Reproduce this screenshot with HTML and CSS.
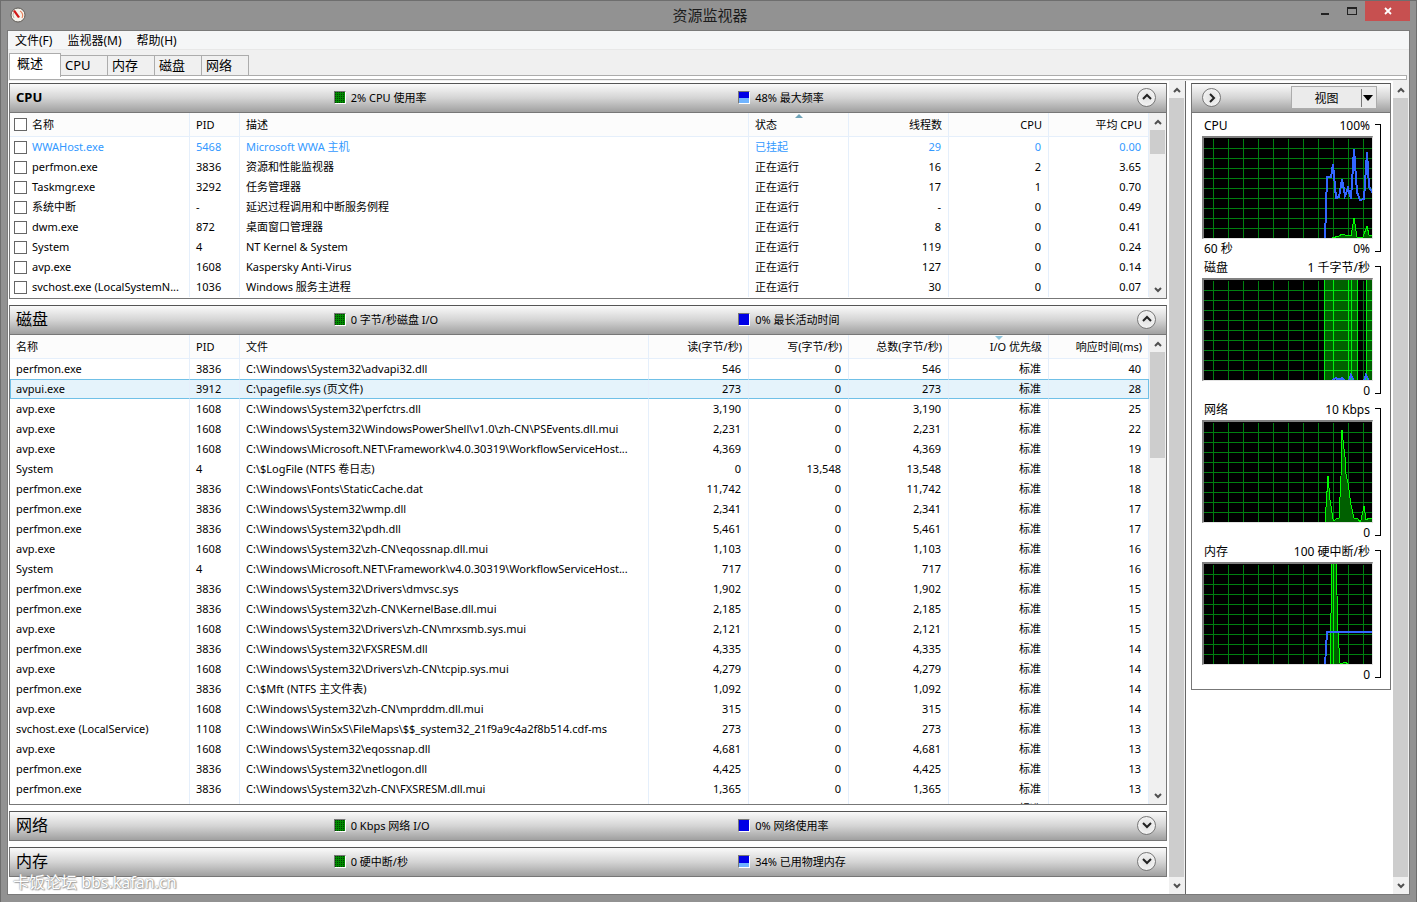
FILE: index.html
```
<!DOCTYPE html>
<html lang="zh-CN">
<head>
    <meta charset="UTF-8">
    <meta name="viewport" content="width=device-width, initial-scale=1.0">
    <title>资源监视器</title>
    <link rel="stylesheet" href="styles.css">
</head>
<body>
    <svg class="defs" width="0" height="0" aria-hidden="true">
        <defs>
            <pattern id="grid" x="-6" y="0" width="15" height="10" patternUnits="userSpaceOnUse">
                <path d="M0 0h15v1H1v9H0z" fill="#008010"/>
            </pattern>
            <pattern id="grid-lit" x="-6" y="0" width="15" height="10" patternUnits="userSpaceOnUse">
                <path d="M0 0h15v1H0z" fill="#00e010"/>
            </pattern>
            <symbol id="up" viewBox="0 0 8 6"><path d="M1 5 4 2l3 3" fill="none" stroke="#505050" stroke-width="2"/></symbol>
            <symbol id="down" viewBox="0 0 8 6"><path d="M1 1l3 3 3-3" fill="none" stroke="#505050" stroke-width="2"/></symbol>
        </defs>
    </svg>

    <div class="window">
        <header class="titlebar">
            <svg class="app-icon" viewBox="0 0 16 16">
                <circle cx="8" cy="8" r="7" fill="#f4f2ec" stroke="#5e5a55"/>
                <path d="M4 11a5 5 0 0 1 0-6" fill="none" stroke="#b9b4aa"/>
                <path d="M10 4a5 5 0 0 1 2 7" fill="none" stroke="#e8805c" stroke-width="1.2"/>
                <path d="M3 4l2-1 5 7-2 1z" fill="#d01717"/>
            </svg>
            <h1>资源监视器</h1>
            <div class="window-buttons">
                <button aria-label="最小化"><svg width="10" height="10"><path d="M1 7h8v2H1z" fill="#222"/></svg></button>
                <button aria-label="最大化"><svg width="10" height="10"><path d="M0 1h10v8H0zM1 3v5h8V3z" fill="#222" fill-rule="evenodd"/></svg></button>
                <button class="close" aria-label="关闭"><svg width="8" height="8"><path d="M1 1l6 6M7 1L1 7" stroke="#fff" stroke-width="1.8"/></svg></button>
            </div>
        </header>

        <div class="client">
            <nav class="menu">
                <button>文件(F)</button>
                <button>监视器(M)</button>
                <button>帮助(H)</button>
            </nav>
            <div class="tabs" role="tablist">
                <button class="tab active" role="tab">概述</button>
                <button class="tab" role="tab">CPU</button>
                <button class="tab" role="tab">内存</button>
                <button class="tab" role="tab">磁盘</button>
                <button class="tab" role="tab">网络</button>
            </div>
            <div class="tab-edge"></div>

            <div class="content">
                <main class="sections">
                    <section class="section">
                        <div class="section-head">
                            <h2 class="bold">CPU</h2>
                            <span class="stat"><i class="led green"></i>2% CPU 使用率</span>
                            <span class="stat"><i class="led blue half"></i>48% 最大频率</span>
                            <button class="round" aria-label="折叠"><svg width="10" height="8"><path d="M1 6l4-4 4 4" fill="none" stroke="#222" stroke-width="2"/></svg></button>
                        </div>
                        <div class="list cpu-list">
                            <table>
                                <colgroup><col class="c-name"><col class="c-pid"><col><col class="c-num"><col class="c-num"><col class="c-num"><col class="c-num"></colgroup>
                                <thead>
                                    <tr><th><label><input type="checkbox">名称</label></th><th>PID</th><th>描述</th><th class="sort-up">状态</th><th class="num">线程数</th><th class="num">CPU</th><th class="num">平均 CPU</th></tr>
                                </thead>
                                <tbody id="cpu-rows"></tbody>
                            </table>
                            <div class="scrollbar">
                                <button aria-label="向上"><svg width="8" height="6"><use href="#up"/></svg></button>
                                <div class="track"><div class="thumb short"></div></div>
                                <button aria-label="向下"><svg width="8" height="6"><use href="#down"/></svg></button>
                            </div>
                        </div>
                    </section>

                    <section class="section">
                        <div class="section-head">
                            <h2>磁盘</h2>
                            <span class="stat"><i class="led green"></i>0 字节/秒磁盘 I/O</span>
                            <span class="stat"><i class="led blue"></i>0% 最长活动时间</span>
                            <button class="round" aria-label="折叠"><svg width="10" height="8"><path d="M1 6l4-4 4 4" fill="none" stroke="#222" stroke-width="2"/></svg></button>
                        </div>
                        <div class="list disk-list">
                            <table>
                                <colgroup><col class="c-name"><col class="c-pid"><col><col class="c-num"><col class="c-num"><col class="c-num"><col class="c-num"><col class="c-num"></colgroup>
                                <thead>
                                    <tr><th>名称</th><th>PID</th><th>文件</th><th class="num">读(字节/秒)</th><th class="num">写(字节/秒)</th><th class="num">总数(字节/秒)</th><th class="num sort-down">I/O 优先级</th><th class="num">响应时间(ms)</th></tr>
                                </thead>
                                <tbody id="disk-rows"></tbody>
                            </table>
                            <div class="scrollbar">
                                <button aria-label="向上"><svg width="8" height="6"><use href="#up"/></svg></button>
                                <div class="track"><div class="thumb medium"></div></div>
                                <button aria-label="向下"><svg width="8" height="6"><use href="#down"/></svg></button>
                            </div>
                        </div>
                    </section>

                    <section class="section">
                        <div class="section-head">
                            <h2>网络</h2>
                            <span class="stat"><i class="led green"></i>0 Kbps 网络 I/O</span>
                            <span class="stat"><i class="led blue"></i>0% 网络使用率</span>
                            <button class="round" aria-label="展开"><svg width="10" height="8"><path d="M1 2l4 4 4-4" fill="none" stroke="#222" stroke-width="2"/></svg></button>
                        </div>
                    </section>

                    <section class="section">
                        <div class="section-head">
                            <h2>内存</h2>
                            <span class="stat"><i class="led green"></i>0 硬中断/秒</span>
                            <span class="stat"><i class="led blue third"></i>34% 已用物理内存</span>
                            <button class="round" aria-label="展开"><svg width="10" height="8"><path d="M1 2l4 4 4-4" fill="none" stroke="#222" stroke-width="2"/></svg></button>
                        </div>
                    </section>
                </main>
                <div class="scrollbar outer">
                    <button aria-label="向上"><svg width="8" height="6"><use href="#up"/></svg></button>
                    <div class="track"><div class="thumb"></div></div>
                    <button aria-label="向下"><svg width="8" height="6"><use href="#down"/></svg></button>
                </div>

                <aside class="graphs">
                    <div class="graph-panel">
                        <div class="section-head">
                            <button class="round" aria-label="隐藏图表"><svg width="8" height="10"><path d="M2 1l4 4-4 4" fill="none" stroke="#222" stroke-width="2"/></svg></button>
                            <button class="view">
                                <span>视图</span>
                                <svg width="12" height="18"><path d="M0 0h1v18H0z" fill="#777"/><path d="M2 6h10L7 12z" fill="#000"/></svg>
                            </button>
                        </div>
                        <div class="graph-list">
                            <figure class="graph">
                                <div class="graph-row"><span>CPU</span><span>100%</span></div>
                                <svg class="plot" viewBox="0 0 168 100" preserveAspectRatio="none">
                                    <path class="grid" d="M0 1h168v99H0z"/>
                                    <path class="area" d="M128 100l7-2 3-2 3 1h3l3 1 3-18 3 19h6l4-11 2 9 3 1v4z"/>
                                    <path class="line" d="M121 101l2-62h4l2-13 3 34 3-1 3-18 3 17 3-8 3 11 3-50 3 43 3 8 4-1 3-47 2 35 4 6"/>
                                </svg>
                                <div class="graph-row"><span>60 秒</span><span>0%</span></div>
                                <div class="bracket"></div>
                            </figure>
                            <figure class="graph">
                                <div class="graph-row"><span>磁盘</span><span>1 千字节/秒</span></div>
                                <svg class="plot" viewBox="0 0 168 100" preserveAspectRatio="none">
                                    <path class="grid" d="M0 1h168v99H0z"/>
                                    <path d="M120 0h34v100h-34zM162 0h6v100h-6z" fill="#006000"/>
                                    <path class="grid-lit" d="M120 1h34v99h-34zM162 1h6v99h-6z"/>
                                    <path d="M120 0h1v100h-1zM129 0h1v100h-1zM144 0h1v100h-1zM147 0h1v100h-1zM153 0h1v100h-1zM162 0h1v100h-1z" fill="#00f010"/>
                                    <path class="line" d="M128 100l4-2 3 2 3-2 3 3M145 101l2-6 3 6M160 101l2-6 3 6"/>
                                </svg>
                                <div class="graph-row"><span></span><span>0</span></div>
                                <div class="bracket"></div>
                            </figure>
                            <figure class="graph">
                                <div class="graph-row"><span>网络</span><span>10 Kbps</span></div>
                                <svg class="plot" viewBox="0 0 168 100" preserveAspectRatio="none">
                                    <path class="grid" d="M0 1h168v99H0z"/>
                                    <path class="area" d="M121 101l3-47 2 24 3 19 1 2 2-2 3-1 2-42 1-46 1 10 2 17 1 17 2 9 3 22 3 13 4 1 2 3 1-2 3-14 2 14 3-2h3v5z"/>
                                </svg>
                                <div class="graph-row"><span></span><span>0</span></div>
                                <div class="bracket"></div>
                            </figure>
                            <figure class="graph">
                                <div class="graph-row"><span>内存</span><span>100 硬中断/秒</span></div>
                                <svg class="plot" viewBox="0 0 168 100" preserveAspectRatio="none">
                                    <path class="grid" d="M0 1h168v99H0z"/>
                                    <path class="area" d="M126 101l2-102h4l1 32 1 38 2 30h3l3-1 2 3z"/>
                                    <path d="M129 0h1v100h-1z" fill="#0f0"/>
                                    <path class="line" d="M121 101l2-33h45"/>
                                </svg>
                                <div class="graph-row"><span></span><span>0</span></div>
                                <div class="bracket"></div>
                            </figure>
                        </div>
                    </div>
                </aside>
                <div class="scrollbar outer">
                    <button aria-label="向上"><svg width="8" height="6"><use href="#up"/></svg></button>
                    <div class="track"><div class="thumb"></div></div>
                    <button aria-label="向下"><svg width="8" height="6"><use href="#down"/></svg></button>
                </div>
            </div>
        </div>
        <div class="watermark">卡饭论坛 bbs.kafan.cn</div>
    </div>
    <script src="script.js"></script>
</body>
</html>
```
FILE: styles.css
```
* {
    box-sizing: border-box;
}

body {
    margin: 0;
    font-family: "Noto Sans", "Noto Sans CJK SC", sans-serif;
    font-size: 11px;
    color: #000;
}

button {
    margin: 0;
    padding: 0;
    border: none;
    background: none;
    font: inherit;
    color: inherit;
}

h1, h2, figure {
    margin: 0;
}

svg {
    display: block;
}

.defs {
    position: absolute;
}

.window {
    position: relative;
    display: flex;
    flex-direction: column;
    min-height: 100vh;
    padding: 0 6px 7px;
    border: 1px solid #6e6e6e;
    background: #929292;
}

/* title bar */
.titlebar {
    display: grid;
    grid-template-columns: 1fr auto 1fr;
    align-items: center;
    height: 29px;
    padding: 0 0 2px 3px;
}

.app-icon {
    width: 16px;
    height: 16px;
}

.titlebar h1 {
    font-size: 15px;
    font-weight: normal;
    line-height: 20px;
    color: #1c1c1c;
}

.window-buttons {
    display: flex;
    justify-self: end;
    align-self: start;
}

.window-buttons button {
    display: flex;
    align-items: center;
    justify-content: center;
    width: 27px;
    height: 20px;
}

.window-buttons .close {
    width: 45px;
    background: #c75050;
}

.client {
    display: flex;
    flex-direction: column;
    flex: 1;
    border: 1px solid #7a7a7a;
    background: #f0f0f0;
}

/* menu and tabs */
.menu {
    display: flex;
    gap: 15px;
    height: 19px;
    padding-left: 7px;
    border-bottom: 1px solid #e8e8e8;
    background: #f5f6f7;
    font-size: 12px;
    line-height: 20px;
}

.tabs {
    display: flex;
    align-items: flex-end;
    height: 26px;
    padding-left: 1px;
    font-size: 13px;
    line-height: 19px;
}

.tab {
    width: 47px;
    height: 21px;
    padding-left: 4px;
    border: 1px solid #acacac;
    border-left: none;
    text-align: left;
}

.tab.active {
    position: relative;
    width: 52px;
    height: 24px;
    margin-bottom: -1px;
    padding: 0 0 5px 7px;
    border-left: 1px solid #acacac;
    border-bottom: none;
    background: #fff;
}

.tab-edge {
    height: 5px;
    margin: -1px 2px 0 1px;
    border: 1px solid #acacac;
    background: #fff;
}

/* sections */
.content {
    display: flex;
    flex: 1;
    margin-top: 1px;
    background: #fff;
}

.sections {
    flex: 1;
    display: flex;
    flex-direction: column;
    gap: 6px;
    min-width: 0;
    padding: 2px 2px 17px 1px;
}

.section,
.graph-panel {
    border: 1px solid #777;
    border-top-color: #555;
}

.section-head {
    display: grid;
    grid-template-columns: 28% 35% 1fr auto;
    align-items: center;
    height: 28px;
    padding-bottom: 2px;
    background: linear-gradient(#fafafa, #d4d4d4 50%, #a0a0a0);
}

.section-head h2 {
    padding-left: 6px;
    font-size: 16px;
    font-weight: normal;
    line-height: 20px;
}

.section-head h2.bold {
    font-size: 13px;
    font-weight: bold;
}

.stat {
    display: flex;
    align-items: center;
    gap: 5px;
}

.led {
    width: 12px;
    height: 13px;
    border: 1px solid #fff;
    border-top-color: #777;
    border-left-color: #777;
}

.led.green {
    background-color: #008a00;
    background-image: radial-gradient(circle at 0 0, #004000 1px, transparent 1px);
    background-size: 2px 2px;
}

.led.blue {
    background: #0000e6;
}

.led.half {
    background: linear-gradient(#0000e6 50%, #70b4ff 50%);
}

.led.third {
    background: linear-gradient(#0000e6 66%, #70b4ff 66%);
}

.round {
    display: flex;
    align-items: center;
    justify-content: center;
    width: 19px;
    height: 19px;
    border: 1px solid #777;
    border-radius: 50%;
    background: radial-gradient(#e0e0e0, #f8f8f8);
}

.section .round {
    margin-right: 10px;
}

/* lists */
.list {
    display: flex;
    overflow: hidden;
    border-top: 1px solid #777;
}

.cpu-list {
    height: 186px;
}

.disk-list {
    height: 470px;
}

table {
    flex: 1;
    align-self: flex-start;
    width: 100%;
    min-width: 0;
    table-layout: fixed;
    border-collapse: separate;
    border-spacing: 0;
}

.c-name {
    width: 180px;
}

.c-pid {
    width: 50px;
}

.c-num {
    width: 100px;
}

th, td {
    height: 20px;
    padding: 0 6px;
    border-right: 1px solid #e5effb;
    font-weight: normal;
    line-height: 18px;
    text-align: left;
    white-space: nowrap;
    overflow: hidden;
    text-overflow: ellipsis;
}

th {
    position: relative;
    height: 24px;
    border-bottom: 1px solid #e5effb;
    background: #fcfcfc;
}

.num {
    text-align: right;
}

td.num {
    padding-right: 7px;
}

.sort-up::after,
.sort-down::after {
    content: "";
    position: absolute;
    top: 1px;
    left: 50%;
    margin-left: -4px;
    border: 4px solid transparent;
    border-top: none;
    border-bottom-color: #6fa3b8;
}

.sort-down::after {
    border-top: 4px solid #8cc3da;
    border-bottom: none;
}

td label,
th label {
    display: flex;
    align-items: center;
    gap: 5px;
    margin-left: -2px;
}

input[type="checkbox"] {
    appearance: none;
    flex: none;
    width: 13px;
    height: 13px;
    margin: 0;
    border: 1px solid #666;
    background: #fff;
}

.suspended {
    color: #3399ff;
}

.selected td {
    border-top: 1px solid #70c0e7;
    border-bottom: 1px solid #70c0e7;
    background: #e5f3fb;
}

.selected td:first-child {
    border-left: 1px solid #70c0e7;
    padding-left: 5px;
}

.selected td:last-child {
    border-right-color: #70c0e7;
}

/* scrollbars */
.scrollbar {
    display: flex;
    flex-direction: column;
    flex: none;
    width: 17px;
    padding: 0 1px;
    background: #f0f0f0;
}

.scrollbar.outer {
    width: 16px;
    padding: 0 1px 0 0;
}

.scrollbar button {
    display: flex;
    align-items: center;
    justify-content: center;
    height: 17px;
}

.track {
    flex: 1;
}

.thumb {
    height: 100%;
    background: #cdcdcd;
}

.thumb.short {
    height: 24px;
}

.thumb.medium {
    height: 106px;
}

/* graphs */
.graphs {
    padding: 2px 2px 0 5px;
    border-left: 1px solid #666;
}

.graph-panel {
    width: 200px;
}

.graph-panel .section-head {
    display: flex;
    justify-content: space-between;
    padding: 0 13px 1px 10px;
}

.view {
    display: flex;
    align-items: center;
    width: 86px;
    height: 23px;
    border: 1px solid #acacac;
    background: #ebebeb;
    font-size: 12px;
}

.view span {
    flex: 1;
}

.view svg {
    flex: none;
    margin-right: 3px;
}

.graph-list {
    padding: 3px 9px 5px 10px;
    border-top: 1px solid #777;
}

.graph {
    display: grid;
    grid-template-columns: 171px 6px;
    grid-template-rows: 20px 103px 19px;
    column-gap: 2px;
}

.graph-row {
    grid-column: 1;
    display: flex;
    justify-content: space-between;
    padding: 0 3px 0 2px;
    font-size: 12px;
    line-height: 19px;
}

.plot {
    grid-column: 1;
    width: 171px;
    height: 103px;
    border: 1px solid #e3e3e3;
    border-top: 2px solid #808080;
    border-left: 2px solid #808080;
    background: #000;
    shape-rendering: crispEdges;
}

.grid {
    fill: url(#grid);
}

.grid-lit {
    fill: url(#grid-lit);
}

.area {
    fill: #006000;
    stroke: #00ff00;
}

.line {
    fill: none;
    stroke: #3366ff;
    stroke-width: 2;
}

.bracket {
    grid-column: 2;
    grid-row: 1 / 4;
    margin: 8px 0 6px;
    border: 1px solid #000;
    border-left: none;
}

.watermark {
    position: absolute;
    left: 12px;
    bottom: 10px;
    font-size: 16px;
    line-height: 20px;
    color: #fff;
    text-shadow: 0 0 1px #888, 0 0 2px #999, 1px 1px 1px #aaa;
}
```
FILE: script.js
```
const cpu = [
    ['WWAHost.exe', '5468', 'Microsoft WWA 主机', '已挂起', '29', '0', '0.00'],
    ['perfmon.exe', '3836', '资源和性能监视器', '正在运行', '16', '2', '3.65'],
    ['Taskmgr.exe', '3292', '任务管理器', '正在运行', '17', '1', '0.70'],
    ['系统中断', '-', '延迟过程调用和中断服务例程', '正在运行', '-', '0', '0.49'],
    ['dwm.exe', '872', '桌面窗口管理器', '正在运行', '8', '0', '0.41'],
    ['System', '4', 'NT Kernel & System', '正在运行', '119', '0', '0.24'],
    ['avp.exe', '1608', 'Kaspersky Anti-Virus', '正在运行', '127', '0', '0.14'],
    ['svchost.exe (LocalSystemN...', '1036', 'Windows 服务主进程', '正在运行', '30', '0', '0.07']
];

const sys = 'C:\\Windows\\System32\\';
const net = 'C:\\Windows\\Microsoft.NET\\Framework\\v4.0.30319\\WorkflowServiceHost...';
const disk = [
    ['perfmon.exe', '3836', sys + 'advapi32.dll', '546', '0', '546', '40'],
    ['avpui.exe', '3912', 'C:\\pagefile.sys (页文件)', '273', '0', '273', '28'],
    ['avp.exe', '1608', sys + 'perfctrs.dll', '3,190', '0', '3,190', '25'],
    ['avp.exe', '1608', sys + 'WindowsPowerShell\\v1.0\\zh-CN\\PSEvents.dll.mui', '2,231', '0', '2,231', '22'],
    ['avp.exe', '1608', net, '4,369', '0', '4,369', '19'],
    ['System', '4', 'C:\\$LogFile (NTFS 卷日志)', '0', '13,548', '13,548', '18'],
    ['perfmon.exe', '3836', 'C:\\Windows\\Fonts\\StaticCache.dat', '11,742', '0', '11,742', '18'],
    ['perfmon.exe', '3836', sys + 'wmp.dll', '2,341', '0', '2,341', '17'],
    ['perfmon.exe', '3836', sys + 'pdh.dll', '5,461', '0', '5,461', '17'],
    ['avp.exe', '1608', sys + 'zh-CN\\eqossnap.dll.mui', '1,103', '0', '1,103', '16'],
    ['System', '4', net, '717', '0', '717', '16'],
    ['perfmon.exe', '3836', sys + 'Drivers\\dmvsc.sys', '1,902', '0', '1,902', '15'],
    ['perfmon.exe', '3836', sys + 'zh-CN\\KernelBase.dll.mui', '2,185', '0', '2,185', '15'],
    ['avp.exe', '1608', sys + 'Drivers\\zh-CN\\mrxsmb.sys.mui', '2,121', '0', '2,121', '15'],
    ['perfmon.exe', '3836', sys + 'FXSRESM.dll', '4,335', '0', '4,335', '14'],
    ['avp.exe', '1608', sys + 'Drivers\\zh-CN\\tcpip.sys.mui', '4,279', '0', '4,279', '14'],
    ['perfmon.exe', '3836', 'C:\\$Mft (NTFS 主文件表)', '1,092', '0', '1,092', '14'],
    ['avp.exe', '1608', sys + 'zh-CN\\mprddm.dll.mui', '315', '0', '315', '14'],
    ['svchost.exe (LocalService)', '1108', 'C:\\Windows\\WinSxS\\FileMaps\\$$_system32_21f9a9c4a2f8b514.cdf-ms', '273', '0', '273', '13'],
    ['avp.exe', '1608', sys + 'eqossnap.dll', '4,681', '0', '4,681', '13'],
    ['perfmon.exe', '3836', sys + 'netlogon.dll', '4,425', '0', '4,425', '13'],
    ['perfmon.exe', '3836', sys + 'zh-CN\\FXSRESM.dll.mui', '1,365', '0', '1,365', '13'],
    ['', '', '', '', '', '', '']
];

document.getElementById('cpu-rows').innerHTML = cpu.map((row, n) => {
    const cells = row.slice(1).map((text, i) => `<td class="${i > 2 ? 'num' : ''}">${text.replace('&', '&amp;')}</td>`);
    return `<tr class="${n === 0 ? 'suspended' : ''}"><td><label><input type="checkbox">${row[0]}</label></td>${cells.join('')}</tr>`;
}).join('');

document.getElementById('disk-rows').innerHTML = disk.map((row, n) => {
    // every entry has normal I/O priority
    const all = [...row.slice(0, 6), '标准', row[6]];
    const cells = all.map((text, i) => `<td class="${i > 2 ? 'num' : ''}">${text}</td>`);
    return `<tr class="${n === 1 ? 'selected' : ''}">${cells.join('')}</tr>`;
}).join('');
```
